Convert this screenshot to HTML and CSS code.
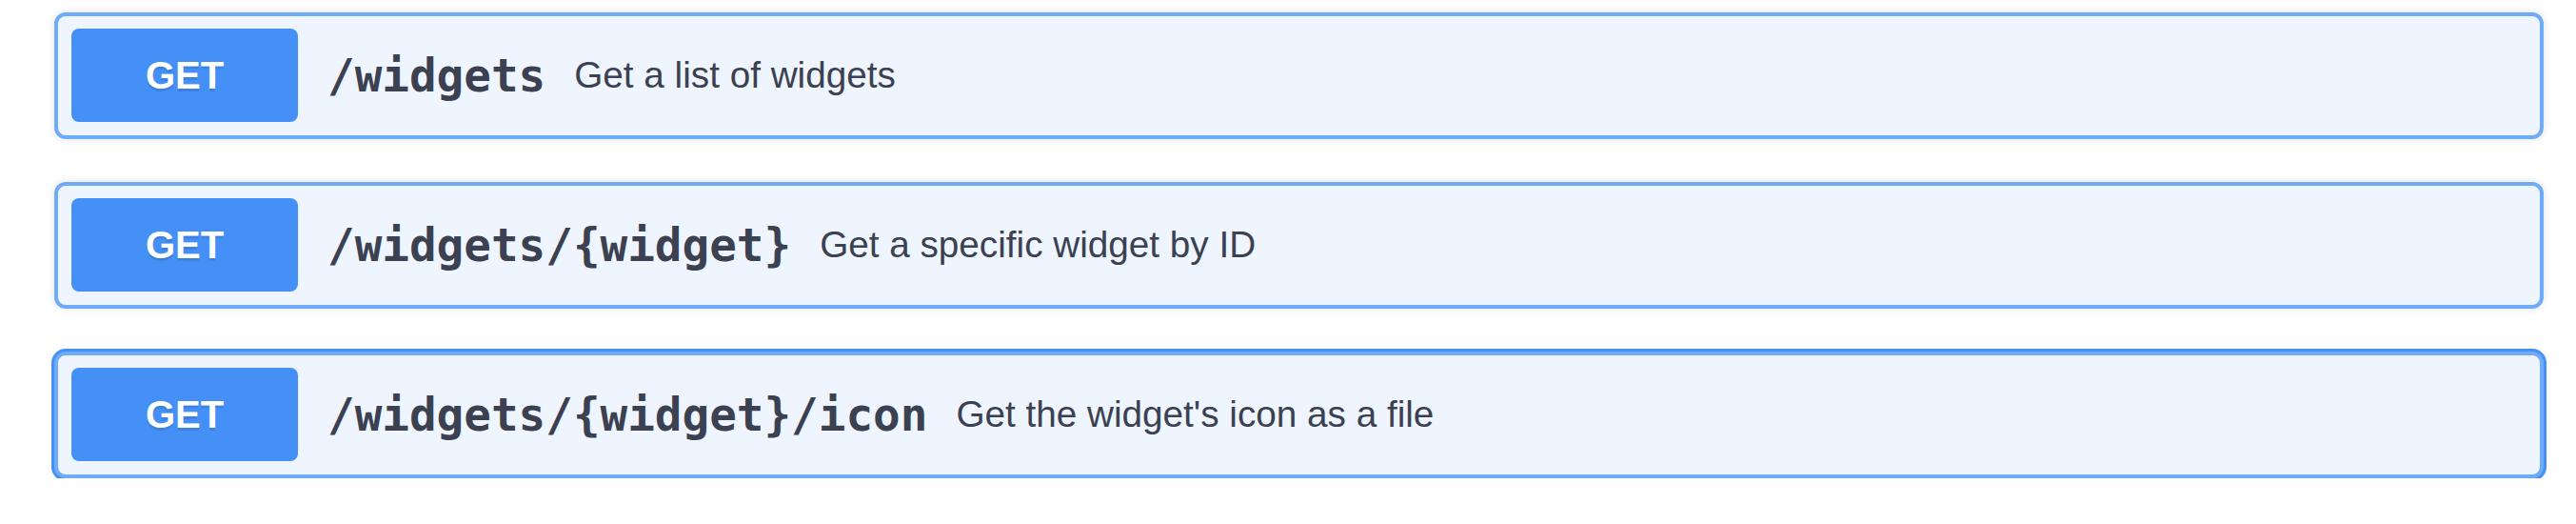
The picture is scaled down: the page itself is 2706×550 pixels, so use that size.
FILE: index.html
```html
<!DOCTYPE html>
<html>
<head>
<meta charset="utf-8">
<link rel="stylesheet" href="styles.css">
</head>
<body>
<div class="opblocks">
  <div class="opblock">
    <div class="summary">
      <span class="method">GET</span>
      <span class="path">/widgets</span>
      <span class="desc">Get a list of widgets</span>
    </div>
  </div>
  <div class="opblock">
    <div class="summary">
      <span class="method">GET</span>
      <span class="path">/widgets/{widget}</span>
      <span class="desc">Get a specific widget by ID</span>
    </div>
  </div>
  <div class="opblock focus">
    <div class="summary">
      <span class="method">GET</span>
      <span class="path">/widgets/{widget}/icon</span>
      <span class="desc">Get the widget's icon as a file</span>
    </div>
  </div>
</div>
</body>
</html>
```
FILE: styles.css
```css
html, body {
  margin: 0;
  background: #ffffff;
}

.opblocks {
  padding: 13px 34px 0 57px;
  display: flex;
  flex-direction: column;
  gap: 45px;
}

.opblock {
  box-sizing: border-box;
  height: 133px;
  border: 4px solid #6eabf8;
  border-radius: 12px;
  background: #eef5fe;
  box-shadow: 0 0 9px rgba(0, 0, 0, 0.12);
}

.opblock.focus {
  box-shadow: 0 0 0 3px #4690f5, 0 0 9px rgba(0, 0, 0, 0.12);
}

.summary {
  box-sizing: border-box;
  height: 100%;
  display: flex;
  align-items: center;
  padding: 13px 14px 14px 14px;
}

.method {
  flex: none;
  width: 238px;
  height: 98px;
  display: flex;
  align-items: center;
  justify-content: center;
  background: #4490f6;
  color: #ffffff;
  border-radius: 8px;
  font-family: "Liberation Sans", Arial, sans-serif;
  font-weight: 700;
  font-size: 40px;
  text-shadow: 0 3px 0 rgba(0, 0, 0, 0.1);
}

.path {
  margin-left: 31px;
  font-family: "DejaVu Sans Mono", monospace;
  font-weight: 700;
  font-size: 47.6px;
  color: #3b4151;
}

.desc {
  margin-left: 30px;
  font-family: "Liberation Sans", Arial, sans-serif;
  font-size: 38.7px;
  color: #3b4151;
}
```
